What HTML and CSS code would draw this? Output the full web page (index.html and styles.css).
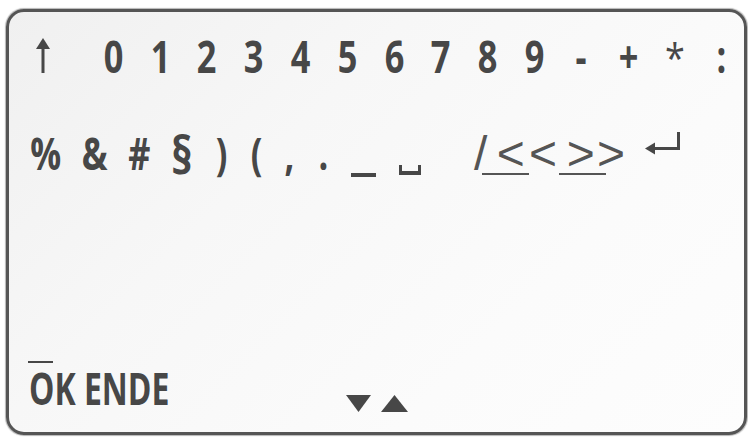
FILE: index.html
```html
<!DOCTYPE html>
<html>
<head>
<meta charset="utf-8">
<link rel="stylesheet" href="styles.css">
</head>
<body>
<div class="screen">
  <div class="row row1">
    <svg class="up" viewBox="0 0 14 35" width="14" height="35"><polygon points="7,0 14,11 0,11" fill="#474747"/><rect x="5.5" y="9" width="3" height="26" fill="#474747"/></svg>
    <div class="digits">
      <span class="c"><b>0</b></span><span class="c"><b>1</b></span><span class="c"><b>2</b></span><span class="c"><b>3</b></span><span class="c"><b>4</b></span><span class="c"><b>5</b></span><span class="c"><b>6</b></span><span class="c"><b>7</b></span><span class="c"><b>8</b></span><span class="c"><b>9</b></span><span class="c"><b>-</b></span><span class="c"><b>+</b></span><span class="c"><b class="star">*</b></span><span class="c"><b>:</b></span>
    </div>
  </div>
  <div class="row row2">
    <div class="syms">
      <span><b>%</b></span><span><b>&amp;</b></span><span><b>#</b></span><span><b class="sect">§</b></span><span><b>)</b></span><span><b>(</b></span><span><b>,</b></span><span><b>.</b></span><span><i class="under"></i></span><span><i class="space"></i></span>
    </div>
    <div class="nav"><span class="slash">/</span><span class="ul ul1">&lt;</span><span>&lt;</span><span class="ul ul2">&gt;</span><span>&gt;</span></div>
    <svg class="enter" viewBox="0 0 36 24" width="36" height="24"><path d="M33.5 0 V16.5 H8" fill="none" stroke="#474747" stroke-width="3"/><polygon points="0,16.5 10,10.5 10,22.5" fill="#474747"/></svg>
  </div>
  <div class="footer">
    <div class="ok"><div class="bar"></div><span class="label">OK ENDE</span></div>
    <svg class="tri" viewBox="0 0 62 17" width="62" height="17"><polygon points="0,0 25,0 12.5,17" fill="#474747"/><polygon points="35,17 62,17 48.5,0" fill="#474747"/></svg>
    <div></div>
  </div>
</div>
</body>
</html>
```
FILE: styles.css
```css
* { box-sizing: border-box; }
html, body { margin: 0; padding: 0; background: #fff; }
body { width: 748px; height: 440px; overflow: hidden; }

.screen {
  margin: 9px 1px 0 6px;
  width: 741px;
  height: 426px;
  border: 3px solid #555;
  border-radius: 18px;
  box-shadow: 0 0 1px 1px #b5b5b5;
  background: linear-gradient(135deg, #f0f0f0 0%, #f7f7f7 35%, #fbfbfb 70%, #fdfdfd 100%);
  display: flex;
  flex-direction: column;
  padding: 23px 0 20px 0;
  font-family: "Open Sans", "Liberation Sans", sans-serif;
  color: #474747;
}

.row1 {
  display: flex;
  align-items: flex-start;
  padding-left: 27px;
  height: 43px;
  font-size: 44px;
  line-height: 43px;
}
.up { margin-top: 3px; flex: none; }
.digits { display: flex; margin-left: 40px; }
.c { width: 46.8px; text-align: center; }
.c b, .syms b {
  display: inline-block;
  font-weight: 700;
  transform: scaleX(0.78);
}
.c .star { font-weight: 400; font-size: 40px; transform: scaleX(0.9); }
.syms .sect { font-size: 52px; line-height: 43px; transform: scaleX(0.85); }

.row2 {
  display: flex;
  align-items: baseline;
  margin-top: 54px;
  padding-left: 12px;
  height: 43px;
}
.syms {
  display: grid;
  grid-template-columns: 50px 46.5px 43.5px 41.5px 37.5px 33.5px 32px 35.5px 44px 50px;
  font-size: 44px;
  line-height: 43px;
  text-align: center;
}
.under {
  display: inline-block;
  width: 25px;
  height: 4px;
  background: #474747;
  vertical-align: -7px;
}
.space {
  display: inline-block;
  width: 22px;
  height: 10px;
  border: 3px solid #474747;
  border-top: none;
  border-bottom-width: 4px;
  vertical-align: -5px;
}
.nav {
  margin-left: 39px;
  font-family: "Liberation Sans", sans-serif;
  font-size: 48px;
  line-height: 39px;
  color: #555;
  white-space: nowrap;
}
.nav span { display: inline-block; }
.ul { border-bottom: 2px solid #555; width: 47px; }
.ul1 { margin-left: -5.3px; padding-left: 14.7px; }
.ul2 { margin-left: 2px; padding-left: 7.7px; margin-right: -9px; }
.enter { align-self: flex-start; margin-top: 0; margin-left: 20px; flex: none; }

.footer {
  margin-top: auto;
  display: grid;
  grid-template-columns: 1fr auto 1fr;
  align-items: end;
}
.ok { padding-left: 19px; }
.bar { width: 25px; height: 2px; background: #474747; }
.label {
  display: inline-block;
  margin-left: 1px;
  font-size: 45px;
  line-height: 49px;
  font-weight: 700;
  white-space: nowrap;
  transform: scaleX(0.71);
  transform-origin: left center;
}
.tri { display: block; }
```
